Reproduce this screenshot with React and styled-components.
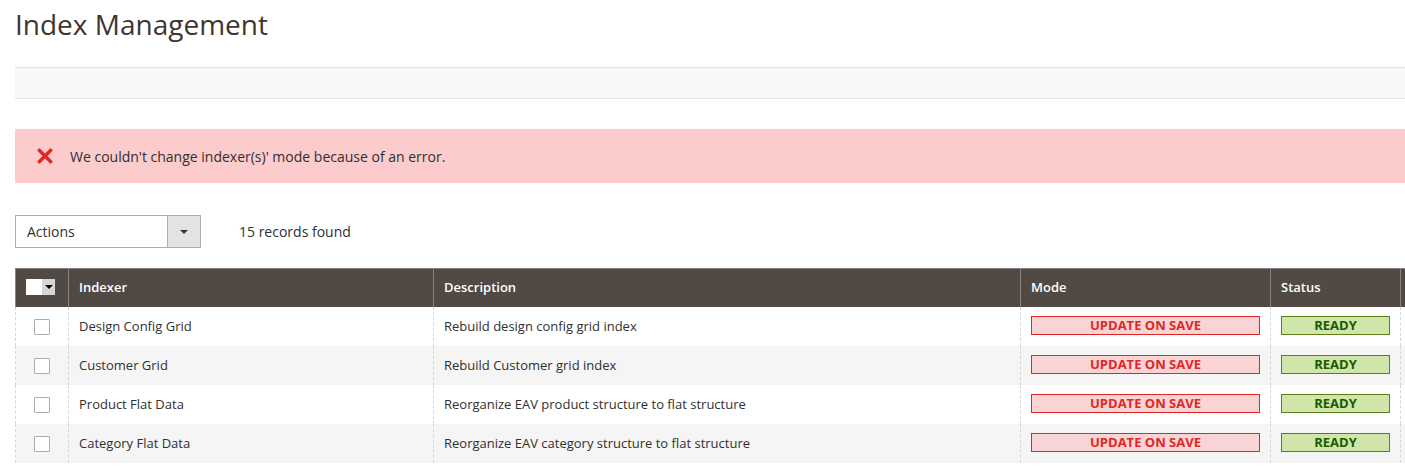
import styled, { createGlobalStyle } from "styled-components";

const GlobalStyle = createGlobalStyle`
  html, body {
    margin: 0;
    padding: 0;
    background: #ffffff;
    overflow: hidden;
  }
  body {
    font-family: "Open Sans", "Liberation Sans", sans-serif;
    color: #303030;
    font-size: 14px;
  }
`;

const rows = [
  { name: "Design Config Grid", desc: "Rebuild design config grid index" },
  { name: "Customer Grid", desc: "Rebuild Customer grid index" },
  { name: "Product Flat Data", desc: "Reorganize EAV product structure to flat structure" },
  { name: "Category Flat Data", desc: "Reorganize EAV category structure to flat structure" },
];

const App = () => {
  return (
    <Page>
      <GlobalStyle />
      <PageTitle>Index Management</PageTitle>
      <ActionsBar />
      <ErrorMessage>
        <ErrorIcon viewBox="0 0 16 16">
          <path d="M2.5 2.5 L13.5 13.5 M13.5 2.5 L2.5 13.5" stroke="#e22626" strokeWidth="3.4" strokeLinecap="square" />
        </ErrorIcon>
        We couldn't change indexer(s)' mode because of an error.
      </ErrorMessage>
      <GridHeader>
        <Select>
          <SelectLabel>Actions</SelectLabel>
          <SelectButton>
            <Triangle $size={4} />
          </SelectButton>
        </Select>
        <RecordsFound>15 records found</RecordsFound>
      </GridHeader>
      <Grid>
        <colgroup>
          <col style={{ width: 53 }} />
          <col style={{ width: 365 }} />
          <col style={{ width: 587 }} />
          <col style={{ width: 250 }} />
          <col style={{ width: 130 }} />
          <col style={{ width: 200 }} />
        </colgroup>
        <thead>
          <tr>
            <Th>
              <MultiCheck>
                <MultiBox />
                <MultiToggle>
                  <Triangle $size={4} $color="#000" />
                </MultiToggle>
              </MultiCheck>
            </Th>
            <Th>Indexer</Th>
            <Th>Description</Th>
            <Th>Mode</Th>
            <Th>Status</Th>
            <Th />
          </tr>
        </thead>
        <tbody>
          {rows.map((r, i) => (
            <Row key={r.name} $odd={i % 2 === 1}>
              <Td $center>
                <Checkbox />
              </Td>
              <Td>{r.name}</Td>
              <Td>{r.desc}</Td>
              <Td>
                <Badge $type="error">Update on Save</Badge>
              </Td>
              <Td>
                <Badge $type="ok">Ready</Badge>
              </Td>
              <Td />
            </Row>
          ))}
        </tbody>
      </Grid>
    </Page>
  );
};

export default App;

const Page = styled.div`
  padding-left: 15px;
  width: 1600px;
`;

const PageTitle = styled.h1`
  margin: 0;
  padding-top: 4px;
  height: 63px;
  font-size: 28px;
  line-height: 40px;
  font-weight: 400;
  color: #41362f;
`;

const ActionsBar = styled.div`
  height: 30px;
  background: #f8f8f8;
  border-top: 1px solid #e3e3e3;
  border-bottom: 1px solid #e3e3e3;
`;

const ErrorMessage = styled.div`
  margin-top: 30px;
  height: 54px;
  width: 1390px;
  box-sizing: border-box;
  background: #fccbcb;
  display: flex;
  align-items: center;
  padding-left: 22px;
  font-size: 14px;
  color: #303030;
`;

const ErrorIcon = styled.svg`
  width: 16px;
  height: 16px;
  margin-right: 17px;
`;

const GridHeader = styled.div`
  margin-top: 32px;
  display: flex;
  align-items: center;
  height: 33px;
`;

const Select = styled.div`
  width: 186px;
  height: 33px;
  box-sizing: border-box;
  border: 1px solid #adadad;
  display: flex;
`;

const SelectLabel = styled.div`
  flex: 1;
  padding-left: 11px;
  display: flex;
  align-items: center;
  font-size: 14px;
`;

const SelectButton = styled.div`
  width: 32px;
  background: #e3e3e3;
  border-left: 1px solid #adadad;
  display: flex;
  align-items: center;
  justify-content: center;
`;

const Triangle = styled.span`
  width: 0;
  height: 0;
  border-left: ${(p) => p.$size}px solid transparent;
  border-right: ${(p) => p.$size}px solid transparent;
  border-top: ${(p) => p.$size}px solid ${(p) => p.$color || "#41362f"};
`;

const RecordsFound = styled.div`
  margin-left: 38px;
  font-size: 14px;
`;

const Grid = styled.table`
  margin-top: 20px;
  border-collapse: collapse;
  table-layout: fixed;
  width: 1585px;
`;

const Th = styled.th`
  background: #514943;
  color: #ffffff;
  border: 1px solid #8a837f;
  border-bottom: none;
  height: 38px;
  padding: 0 10px 1px;
  text-align: left;
  font-weight: 600;
  font-size: 13px;
  box-sizing: border-box;
  vertical-align: middle;
`;

const MultiCheck = styled.div`
  display: flex;
  width: 29px;
  height: 16px;
`;

const MultiBox = styled.div`
  width: 16px;
  height: 16px;
  background: #ffffff;
`;

const MultiToggle = styled.div`
  width: 13px;
  height: 16px;
  background: #d6d6d6;
  display: flex;
  align-items: center;
  justify-content: center;
`;

const Row = styled.tr`
  background: ${(p) => (p.$odd ? "#f5f5f5" : "#ffffff")};
`;

const Td = styled.td`
  height: 39px;
  padding: 0 10px 1px;
  border-left: 1px dashed #d6d6d6;
  border-right: 1px dashed #d6d6d6;
  text-align: ${(p) => (p.$center ? "center" : "left")};
  vertical-align: middle;
  font-size: 13px;
  color: #303030;
  box-sizing: border-box;
  white-space: nowrap;
`;

const Checkbox = styled.span`
  display: inline-block;
  width: 16px;
  height: 16px;
  box-sizing: border-box;
  border: 1px solid #adadad;
  border-radius: 1px;
  background: #ffffff;
  vertical-align: middle;
`;

const Badge = styled.div`
  height: 19px;
  box-sizing: border-box;
  border: 1px solid ${(p) => (p.$type === "error" ? "#e22626" : "#5b8116")};
  background: ${(p) => (p.$type === "error" ? "#f9d4d4" : "#d0e5a9")};
  color: ${(p) => (p.$type === "error" ? "#e22626" : "#185b00")};
  text-transform: uppercase;
  font-weight: 700;
  font-size: 13px;
  line-height: 17px;
  text-align: center;
`;
